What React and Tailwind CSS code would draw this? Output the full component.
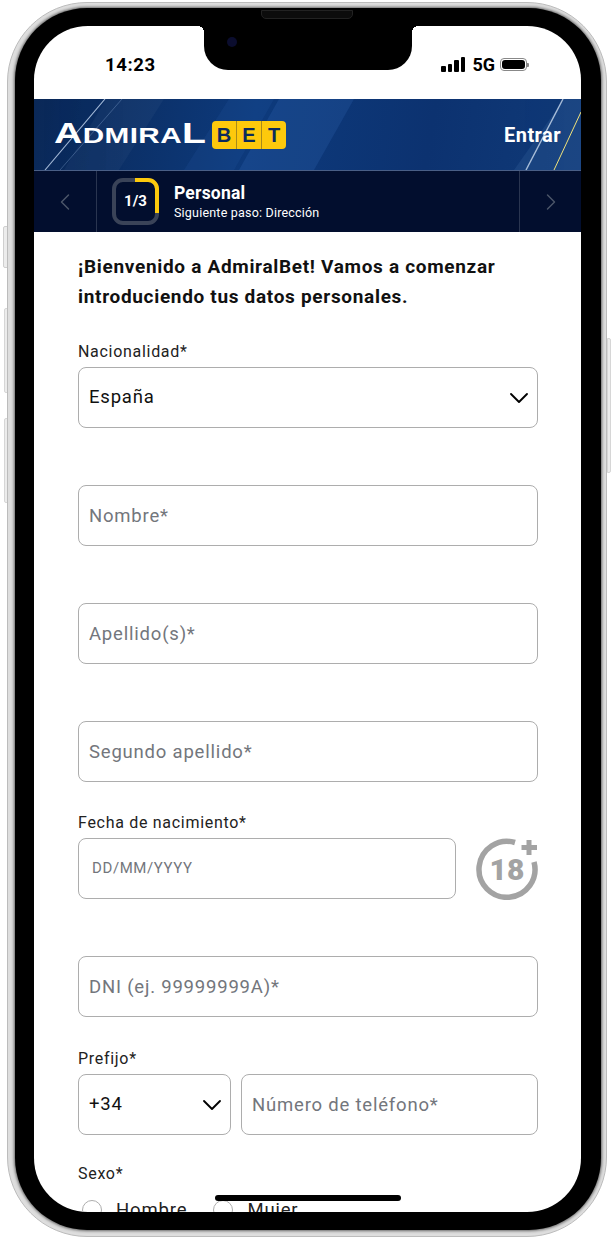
import React from "react";
import { ChevronDown, ChevronLeft, ChevronRight } from "lucide-react";

const font = "font-['Roboto',sans-serif]";

const TextField = ({ label, placeholder, className = "" }) => (
  <div className={`flex flex-col ${className}`}>
    <label className="h-[18px] mb-[6px] text-[16px] leading-[18px] tracking-[0.7px] text-[#222]">{label}</label>
    <input
      readOnly
      placeholder={placeholder}
      className="w-full h-[61px] px-[10px] border border-[#adadad] rounded-[8px] text-[18.5px] tracking-[0.8px] outline-none placeholder:text-[#73767c]"
    />
  </div>
);

const SelectField = ({ label, value, className = "" }) => (
  <div className={`flex flex-col ${className}`}>
    <label className="h-[18px] mb-[6px] text-[16px] leading-[18px] tracking-[0.7px] text-[#222]">{label}</label>
    <div className="h-[61px] px-[10px] flex items-center justify-between border border-[#adadad] rounded-[8px] text-[18.5px] tracking-[0.8px] text-[#111]">
      <span>{value}</span>
      <ChevronDown size={32} strokeWidth={1.4} className="text-black -mr-[8px]" />
    </div>
  </div>
);

const HeaderStreaks = () => (
  <svg className="absolute inset-0 w-full h-full" viewBox="0 0 547 71" preserveAspectRatio="none">
    <polygon points="30,71 72,0 130,0 85,71" fill="#ffffff" opacity="0.035" />
    <polygon points="205,71 245,0 320,0 280,71" fill="#4f8fe0" opacity="0.14" />
    <polygon points="150,71 195,0 240,0 200,71" fill="#4f8fe0" opacity="0.08" />
    <polygon points="480,71 530,0 547,0 547,71" fill="#6f9fd8" opacity="0.12" />
    <line x1="11" y1="71" x2="71" y2="0" stroke="#d8e9ff" strokeWidth="1.1" opacity="0.75" />
    <line x1="26" y1="71" x2="88" y2="0" stroke="#a9c8f0" strokeWidth="0.8" opacity="0.35" />
    <line x1="492" y1="71" x2="529" y2="0" stroke="#e6f2ff" strokeWidth="1.4" opacity="0.7" />
    <line x1="520" y1="71" x2="547" y2="13" stroke="#f0e27a" strokeWidth="1" />
  </svg>
);

const StepProgress = () => (
  <svg width="47" height="47" viewBox="0 0 47 47" className="absolute inset-0">
    <rect x="2" y="2" width="43" height="43" rx="9" fill="none" stroke="#3a4358" strokeWidth="4" />
    <path d="M23 2 H36 A9 9 0 0 1 45 11 V35" fill="none" stroke="#fdc90c" strokeWidth="4" />
  </svg>
);

const App = () => {
  return (
    <div className={`relative w-[611px] h-[1239px] overflow-hidden bg-white ${font}`}>
      {/* side buttons */}
      <div className="absolute left-[3px] top-[226px] w-[5px] h-[42px] rounded-l-[2px] border border-[#cfcfcf] bg-[#ececec]" />
      <div className="absolute left-[4px] top-[308px] w-[4px] h-[85px] rounded-l-[2px] border border-[#d6d6d6] bg-[#ececec]" />
      <div className="absolute left-[4px] top-[418px] w-[4px] h-[85px] rounded-l-[2px] border border-[#d6d6d6] bg-[#ececec]" />
      <div className="absolute left-[607px] top-[338px] w-[4px] h-[135px] rounded-r-[2px] border border-[#d6d6d6] bg-[#ececec]" />

      <div className="pl-[7px] pt-[2px]">
        <div className="relative w-[600px] h-[1235px] rounded-[80px] bg-[#dedede] border border-[#bcbcbc] pl-[7px] pr-[5px] pt-[5px] pb-[6px]">
          <div className="relative h-full rounded-[72px] bg-black pl-[19px] pr-[20px] pt-[18px] pb-[18px] shadow-[0_0_3px_1px_rgba(0,0,0,0.55)]">
            {/* speaker */}
            <div className="absolute left-[246px] top-[2px] w-[92px] h-[9px] rounded-b-[5px] border border-[#222] bg-[#0c0c0c]" />

            <div className="relative h-full rounded-[54px] overflow-hidden bg-white text-[#222]">
              {/* notch */}
              <div className="absolute left-[170px] top-0 w-[208px] h-[44px] rounded-b-[24px] bg-black flex items-start">
                <div className="absolute -left-[6px] top-0 w-[6px] h-[6px] bg-[radial-gradient(circle_at_0_100%,transparent_6px,#000_6px)]" />
                <div className="absolute -right-[6px] top-0 w-[6px] h-[6px] bg-[radial-gradient(circle_at_100%_100%,transparent_6px,#000_6px)]" />
                <div className="ml-[23px] mt-[11px] w-[10px] h-[10px] rounded-full bg-[#0b0d2e]" />
              </div>

              {/* status bar */}
              <div className="h-[73px] pt-[4px] pl-[71px] pr-[52px] flex justify-between items-center">
                <span className="text-[18.5px] leading-[24px] font-bold tracking-[0.6px] text-black">14:23</span>
                <div className="flex items-center">
                  <div className="flex items-end gap-[2px] h-[15px]">
                    <div className="w-[4.5px] h-[6px] rounded-[1px] bg-black" />
                    <div className="w-[4.5px] h-[8px] rounded-[1px] bg-black" />
                    <div className="w-[4.5px] h-[12px] rounded-[1px] bg-black" />
                    <div className="w-[4.5px] h-[15px] rounded-[1px] bg-black" />
                  </div>
                  <span className="ml-[7px] text-[18px] leading-[20px] font-bold text-black">5G</span>
                  <div className="ml-[5px] w-[27px] h-[13px] p-[1px] rounded-[4px] border border-[#888]">
                    <div className="w-full h-full rounded-[3px] bg-black" />
                  </div>
                  <div className="w-[2px] h-[4px] bg-[#888] rounded-r-[1px]" />
                </div>
              </div>

              {/* header */}
              <div className="relative h-[72px] border-b border-[#4a5f86] bg-[linear-gradient(100deg,#0a2857_0%,#0d3a7c_40%,#0c3270_72%,#103a78_100%)] flex items-center justify-between pl-[20px] pr-[20px]">
                <HeaderStreaks />
                <div className="relative flex items-center">
                  <div className="w-[153px] h-[30px] flex items-center text-white font-['Liberation_Sans',sans-serif] font-bold leading-none">
                    <div className="flex items-baseline origin-left scale-x-[1.35] tracking-[0.3px]">
                      <span className="text-[29px] leading-[26px]">A</span>
                      <span className="text-[22px] leading-[26px]">DMIRA</span>
                      <span className="text-[29px] leading-[26px]">L</span>
                    </div>
                  </div>
                  <div className="ml-[5px] w-[74px] h-[28px] rounded-[4px] bg-[#fdc90c] flex text-[#0b2a5c] font-['Liberation_Sans',sans-serif] font-bold text-[20px] leading-[28px] text-center">
                    <span className="flex-1">B</span>
                    <span className="flex-1 border-x border-[#a98a1a]">E</span>
                    <span className="flex-1">T</span>
                  </div>
                </div>
                <span className="relative pt-[1px] text-[20px] font-bold tracking-[0.45px] text-white">Entrar</span>
              </div>

              {/* stepper */}
              <div className="h-[61px] bg-[#020e2e] flex items-stretch text-white">
                <div className="w-[63px] border-r border-[#2a3550] flex items-center justify-center">
                  <ChevronLeft size={28} strokeWidth={1.25} className="text-[#4b5568]" />
                </div>
                <div className="flex-1 flex items-center pl-[15px]">
                  <div className="relative w-[47px] h-[47px] flex items-center justify-center">
                    <StepProgress />
                    <span className="relative text-[15px] font-bold">1/3</span>
                  </div>
                  <div className="ml-[15px] pt-[1px] flex flex-col">
                    <span className="text-[17.5px] leading-[22px] font-bold tracking-[0.2px]">Personal</span>
                    <span className="text-[12.5px] leading-[18px] tracking-[0.2px]">Siguiente paso: Dirección</span>
                  </div>
                </div>
                <div className="w-[62px] border-l border-[#2a3550] flex items-center justify-center">
                  <ChevronRight size={28} strokeWidth={1.25} className="text-[#4b5568]" />
                </div>
              </div>

              {/* form */}
              <div className="pl-[44px] pr-[43px]">
                <p className="pt-[20px] text-[19px] leading-[30px] font-bold tracking-[0.68px] text-[#111]">
                  ¡Bienvenido a AdmiralBet! Vamos a comenzar introduciendo tus datos personales.
                </p>
                <SelectField label="Nacionalidad*" value="España" className="mt-[31px]" />
                <TextField placeholder="Nombre*" className="mt-[33px]" />
                <TextField placeholder="Apellido(s)*" className="mt-[33px]" />
                <TextField placeholder="Segundo apellido*" className="mt-[33px]" />
                <div className="mt-[32px] flex items-end gap-[20px]">
                  <div className="flex-1 flex flex-col">
                    <label className="h-[18px] mb-[6px] text-[16px] leading-[18px] tracking-[0.7px] text-[#222]">Fecha de nacimiento*</label>
                    <input
                      readOnly
                      placeholder="DD/MM/YYYY"
                      className="w-full h-[61px] px-[13px] pb-[2px] border border-[#adadad] rounded-[8px] text-[15px] tracking-[0.6px] outline-none placeholder:text-[#73767c]"
                    />
                  </div>
                  <div className="relative w-[62px] h-[62px] mb-[-1px]">
                    <svg width="62" height="62" viewBox="0 0 62 62" className="absolute inset-0">
                      <path d="M39 4.5 A28 28 0 1 0 58 24" fill="none" stroke="#a3a3a3" strokeWidth="5.5" />
                      <path d="M53 2 V17 M45.5 9.5 H61" fill="none" stroke="#a3a3a3" strokeWidth="5" />
                    </svg>
                    <span className="absolute inset-0 flex items-center justify-center pt-[1px] text-[30px] font-black text-[#a3a3a3]">18</span>
                  </div>
                </div>
                <TextField placeholder="DNI (ej. 99999999A)*" className="mt-[33px]" />
                <div className="mt-[33px] flex items-end gap-[10px]">
                  <SelectField label="Prefijo*" value="+34" className="w-[153px]" />
                  <TextField placeholder="Número de teléfono*" className="flex-1" />
                </div>
                <div className="mt-[29px]">
                  <div className="h-[20px] text-[16px] leading-[20px] tracking-[0.7px] text-[#222]">Sexo*</div>
                  <div className="mt-[16px] flex items-center text-[18.5px] leading-[20px] tracking-[0.85px]">
                    <div className="ml-[4px] w-[20px] h-[20px] rounded-full border border-[#adadad]" />
                    <span className="ml-[14px]">Hombre</span>
                    <div className="ml-[26px] w-[20px] h-[20px] rounded-full border border-[#adadad]" />
                    <span className="ml-[14px]">Mujer</span>
                  </div>
                </div>
              </div>

              {/* home indicator */}
              <div className="absolute left-[181px] bottom-[11px] w-[186px] h-[6px] rounded-full bg-black" />
            </div>
          </div>
        </div>
      </div>
    </div>
  );
};

export default App;
